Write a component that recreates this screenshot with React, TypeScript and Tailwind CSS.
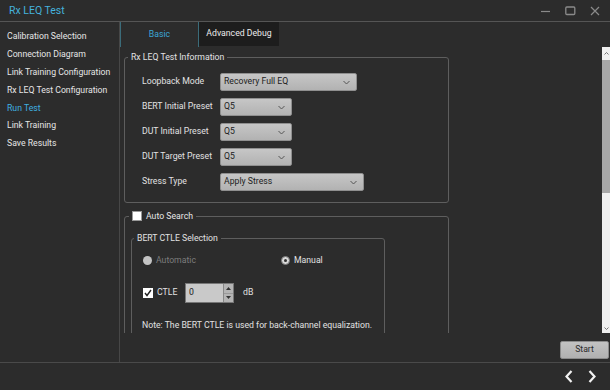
import React from 'react';

const navItems = [
  'Calibration Selection',
  'Connection Diagram',
  'Link Training Configuration',
  'Rx LEQ Test Configuration',
  'Run Test',
  'Link Training',
  'Save Results',
];

function Chevron() {
  return (
    <svg width="7" height="5" viewBox="0 0 7 5" className="shrink-0">
      <path d="M0.5 1 L3.5 4 L6.5 1" fill="none" stroke="#555" strokeWidth="1" />
    </svg>
  );
}

function Select({ value, className }: { value: string; className: string }) {
  return (
    <div
      className={`${className} h-[18px] rounded-[2px] border border-[#8f8f8f] bg-gradient-to-b from-[#c6c6c6] to-[#b2b2b2] flex items-center justify-between pl-[3px] pr-[6px] text-[#1c1c1c]`}
    >
      <span>{value}</span>
      <Chevron />
    </div>
  );
}

function FormRow({ label, children }: { label: string; children: React.ReactNode }) {
  return (
    <div className="flex items-center h-[18px]">
      <span className="w-[78px] shrink-0 text-[#e2e2e2]">{label}</span>
      {children}
    </div>
  );
}

export default function App() {
  return (
    <div className="w-[610px] h-[390px] bg-[#2c2c2c] flex flex-col overflow-hidden font-['Roboto','Liberation_Sans',sans-serif] text-[8.7px] text-[#e2e2e2]">
      {/* title bar */}
      <div className="h-[22px] shrink-0 border-b border-[#555] flex items-center justify-between pl-[9px] pr-[10px]">
        <span className="text-[10.5px] text-[#45b2dc]">Rx LEQ Test</span>
        <div className="flex items-center gap-[14px]">
          <svg width="10" height="10" viewBox="0 0 10 10">
            <path d="M0 5.5 H9" stroke="#8a8a8a" strokeWidth="1.2" />
          </svg>
          <svg width="11" height="10" viewBox="0 0 11 10">
            <rect x="0.8" y="1" width="9" height="7.5" rx="1" fill="none" stroke="#8a8a8a" strokeWidth="1.3" />
          </svg>
          <svg width="10" height="10" viewBox="0 0 10 10">
            <path d="M1 1 L9 9 M9 1 L1 9" stroke="#8a8a8a" strokeWidth="1.2" />
          </svg>
        </div>
      </div>

      <div className="flex h-[341px] shrink-0 border-b border-[#4a4a4a]">
        {/* sidebar */}
        <div className="w-[120px] shrink-0 border-r border-[#474747] pt-[6px] pl-[7px]">
          {navItems.map((item) => (
            <div
              key={item}
              className={`h-[17.8px] flex items-center ${item === 'Run Test' ? 'text-[#3fb0e0]' : 'text-[#e6e6e6]'}`}
            >
              {item}
            </div>
          ))}
        </div>

        {/* main */}
        <div className="flex-1 flex flex-col">
          <div className="h-[25px] shrink-0 flex">
            <div className="w-[79px] border-l border-r border-[#3b6c7a] flex items-center justify-center text-[#3ba6d6]">
              Basic
            </div>
            <div className="w-[80px] h-[24px] bg-[#1d1d1d] flex items-center justify-center text-[#ececec]">
              Advanced Debug
            </div>
          </div>

          <div className="h-[286px] shrink-0 flex">
            <div className="flex-1 overflow-hidden pl-[4px] pt-[4px]">
              <fieldset className="w-[325px] border border-[#5e5e5e] rounded-[3px] pl-[17px] pt-[10px] pb-[11px]">
                <legend className="-ml-[14px] px-[3px] leading-[12px]">Rx LEQ Test Information</legend>
                <div className="flex flex-col gap-[7px]">
                  <FormRow label="Loopback Mode">
                    <Select value="Recovery Full EQ" className="w-[137px]" />
                  </FormRow>
                  <FormRow label="BERT Initial Preset">
                    <Select value="Q5" className="w-[72px]" />
                  </FormRow>
                  <FormRow label="DUT Initial Preset">
                    <Select value="Q5" className="w-[72px]" />
                  </FormRow>
                  <FormRow label="DUT Target Preset">
                    <Select value="Q5" className="w-[72px]" />
                  </FormRow>
                  <FormRow label="Stress Type">
                    <Select value="Apply Stress" className="w-[144px]" />
                  </FormRow>
                </div>
              </fieldset>

              <fieldset className="mt-[7px] w-[325px] border border-[#5e5e5e] rounded-[3px] pl-[6px] pt-[10px] pb-[20px]">
                <legend className="-ml-[2px] px-[3px] flex items-center gap-[4px] leading-[12px]">
                  <span className="w-[10px] h-[10px] bg-white border border-[#999]" />
                  <span className="text-[#e6e6e6]">Auto Search</span>
                </legend>
                <fieldset className="w-[254px] border border-[#5e5e5e] rounded-[3px] pl-[11px] pt-[10px] pb-[12px]">
                  <legend className="-ml-[9px] px-[3px] leading-[12px]">BERT CTLE Selection</legend>
                  <div className="flex items-center h-[14px]">
                    <div className="w-[138px] flex items-center gap-[4px] text-[#7c7c7c]">
                      <span className="w-[9px] h-[9px] rounded-full bg-[#c4c4c4]" />
                      <span>Automatic</span>
                    </div>
                    <div className="flex items-center gap-[4px]">
                      <span className="w-[9px] h-[9px] rounded-full bg-[#d8d8d8] border border-[#777] flex items-center justify-center">
                        <span className="w-[3px] h-[3px] rounded-full bg-[#333]" />
                      </span>
                      <span>Manual</span>
                    </div>
                  </div>

                  <div className="mt-[15px] flex items-center h-[20px]">
                    <span className="w-[10px] h-[10px] bg-white flex items-center justify-center">
                      <svg width="8" height="8" viewBox="0 0 8 8">
                        <path d="M1 4 L3 6.5 L7 1" fill="none" stroke="#222" strokeWidth="1.4" />
                      </svg>
                    </span>
                    <span className="ml-[4px] w-[28px]">CTLE</span>
                    <div className="flex h-[20px] border border-[#777]">
                      <div className="w-[37px] bg-[#c9c9c9] text-[#1a1a1a] pl-[3px] flex items-center">0</div>
                      <div className="w-[10px] bg-[#b4b4b4] flex flex-col border-l border-[#888]">
                        <div className="flex-1 flex items-center justify-center">
                          <svg width="5" height="3" viewBox="0 0 5 3">
                            <path d="M0 3 L2.5 0 L5 3 Z" fill="#333" />
                          </svg>
                        </div>
                        <div className="flex-1 flex items-center justify-center border-t border-[#999]">
                          <svg width="5" height="3" viewBox="0 0 5 3">
                            <path d="M0 0 L2.5 3 L5 0 Z" fill="#333" />
                          </svg>
                        </div>
                      </div>
                    </div>
                    <span className="ml-[9px]">dB</span>
                  </div>

                  <div className="mt-[16px] -ml-[1px] leading-[12px]">
                    Note: The BERT CTLE is used for back-channel equalization.
                  </div>
                </fieldset>
              </fieldset>
            </div>

            {/* scrollbar */}
            <div className="w-[8px] shrink-0 ml-[2px] bg-[#efefef] flex flex-col">
              <div className="h-[13px] flex items-center justify-center">
                <svg width="5" height="3" viewBox="0 0 5 3">
                  <path d="M0.5 2.5 L2.5 0.5 L4.5 2.5" fill="none" stroke="#666" strokeWidth="0.9" />
                </svg>
              </div>
              <div className="h-[133px] bg-[#a7a7a7]" />
              <div className="flex-1" />
              <div className="h-[10px] flex items-center justify-center">
                <svg width="5" height="3" viewBox="0 0 5 3">
                  <path d="M0.5 0.5 L2.5 2.5 L4.5 0.5" fill="none" stroke="#666" strokeWidth="0.9" />
                </svg>
              </div>
            </div>
          </div>

          <div className="flex-1 flex justify-end items-start pt-[8px] pr-[1px]">
            <button className="w-[49px] h-[18px] bg-gradient-to-b from-[#c2c2c2] to-[#b0b0b0] border border-[#8a8a8a] rounded-[2px] text-[#2a2a2a]">
              Start
            </button>
          </div>
        </div>
      </div>

      {/* bottom bar */}
      <div className="flex-1 flex items-center justify-end pr-[14px] gap-[15px]">
        <svg width="8" height="13" viewBox="0 0 8 13">
          <path d="M6.5 1 L1.5 6.5 L6.5 12" fill="none" stroke="#f2f2f2" strokeWidth="2.2" />
        </svg>
        <svg width="8" height="13" viewBox="0 0 8 13">
          <path d="M1.5 1 L6.5 6.5 L1.5 12" fill="none" stroke="#f2f2f2" strokeWidth="2.2" />
        </svg>
      </div>
    </div>
  );
}
